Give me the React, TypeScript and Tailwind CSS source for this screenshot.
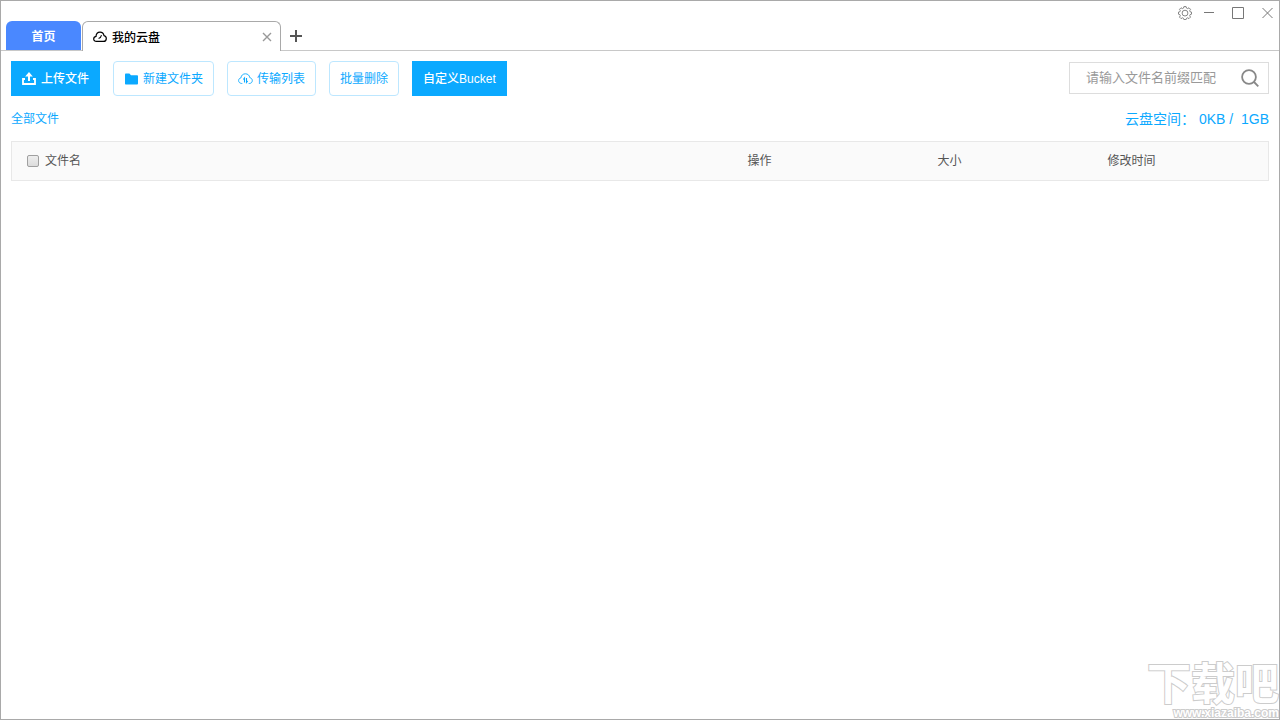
import type { ReactNode } from 'react';

// ============================================
// Cloud drive window
// ============================================

export default function App() {
  return (
    <div className="relative flex min-h-screen flex-col overflow-hidden border border-[#a9a9a9] bg-white font-['Liberation_Sans','Noto_Sans_CJK_SC',sans-serif] text-xs text-[#555]">
      <TitleBar />
      <main className="flex-1 px-[10px] pt-[10px]">
        <Toolbar />
        <div className="mt-[11px] flex h-6 items-center justify-between text-[#0ba9ff]">
          <a href="#all">全部文件</a>
          <span className="whitespace-pre text-sm">云盘空间： 0KB /  1GB</span>
        </div>
        <FileTable />
      </main>
      <Watermark />
    </div>
  );
}

// Tabs and window controls
function TitleBar() {
  return (
    <header className="flex h-[50px] items-end border-b border-[#c8c8c8] pl-[5px]">
      <button className="h-[29px] w-[75px] rounded-t-md bg-[#4a88ff] pt-0.5 font-bold text-white">首页</button>
      <div className="-mb-px ml-px flex h-[30px] w-[199px] items-center rounded-t-md border border-b-0 border-[#a9a9a9] bg-white pl-[10px] pr-2 text-black">
        <CloudIcon />
        <span className="ml-[5px] flex-1 pt-0.5 font-medium">我的云盘</span>
        <button aria-label="关闭标签" className="text-[#999]">
          <svg width="10" height="10" viewBox="0 0 10 10" fill="none" stroke="currentColor" strokeWidth="1.4">
            <path d="M1 1l8 8M9 1L1 9" />
          </svg>
        </button>
      </div>
      <button aria-label="新建标签" className="mb-2 ml-[9px] text-[#555]">
        <svg width="12" height="12" viewBox="0 0 12 12" fill="none" stroke="currentColor" strokeWidth="2">
          <path d="M6 0v12M0 6h12" />
        </svg>
      </button>
      <div className="ml-auto flex h-6 items-center self-start pr-[6px] text-[#777]">
        <button aria-label="设置">
          <GearIcon />
        </button>
        <button aria-label="最小化" className="ml-3">
          <svg width="10" height="12" viewBox="0 0 10 12" fill="none" stroke="currentColor">
            <path d="M0 5.5h10" />
          </svg>
        </button>
        <button aria-label="最大化" className="ml-[18px]">
          <svg width="12" height="12" viewBox="0 0 12 12" fill="none" stroke="currentColor">
            <path d="M.5.5h11v11H.5z" />
          </svg>
        </button>
        <button aria-label="关闭" className="ml-[18px]">
          <svg width="11" height="12" viewBox="0 0 11 12" fill="none" stroke="currentColor">
            <path d="M.5 1l10 10M10.5 1L.5 11" />
          </svg>
        </button>
      </div>
    </header>
  );
}

function Toolbar() {
  return (
    <div className="flex h-[35px] items-center gap-[13px]">
      <ToolButton primary icon={<UploadIcon />} label="上传文件" />
      <ToolButton icon={<FolderIcon />} label="新建文件夹" />
      <ToolButton icon={<TransferIcon />} label="传输列表" />
      <ToolButton label="批量删除" />
      <ToolButton primary label="自定义Bucket" />
      <div className="mt-px ml-auto flex h-8 w-[200px] items-center self-start border border-[#ddd] pl-4 pr-[9px]">
        <input
          type="text"
          aria-label="搜索文件"
          placeholder="请输入文件名前缀匹配"
          className="w-0 flex-1 text-[13px] text-[#555] outline-none placeholder:text-[#999]"
        />
        <button aria-label="搜索" className="text-[#888]">
          <svg width="18" height="18" viewBox="0 0 18 18" fill="none" stroke="currentColor" strokeWidth="1.8">
            <circle cx="8" cy="8" r="6.9" />
            <path d="M13 13l4.3 4.3" />
          </svg>
        </button>
      </div>
    </div>
  );
}

interface ToolButtonProps {
  label: string;
  icon?: ReactNode;
  primary?: boolean;
}

function ToolButton({ label, icon, primary }: ToolButtonProps) {
  const look = primary
    ? 'border-[#0ba9ff] bg-[#0ba9ff] font-medium text-white'
    : 'rounded border-[#bde7ff] bg-white text-[#0ba9ff]';

  return (
    <button className={`flex h-[35px] items-center gap-1 whitespace-nowrap border px-[10px] ${look}`}>
      {icon}
      {label}
    </button>
  );
}

function FileTable() {
  return (
    <table className="mt-[10px] w-full table-fixed border-collapse border border-[#e8e8e8] bg-[#fafafa] text-left">
      <thead>
        <tr className="h-[39px]">
          <th className="pl-[15px] font-normal">
            <label className="flex items-center gap-[6px]">
              <input
                type="checkbox"
                className="h-3 w-3 appearance-none rounded-xs border border-[#a0a0a0] bg-linear-to-b from-[#eee] to-[#dcdcdc] checked:bg-[#0ba9ff]"
              />
              文件名
            </label>
          </th>
          <th className="w-[190px] font-normal">操作</th>
          <th className="w-[170px] font-normal">大小</th>
          <th className="w-[161px] font-normal">修改时间</th>
        </tr>
      </thead>
    </table>
  );
}

// Site mark over the bottom right corner
function Watermark() {
  return (
    <div className="pointer-events-none absolute right-0 bottom-0 flex flex-col items-end font-bold text-white select-none [-webkit-text-stroke:2px_#ccc] [paint-order:stroke_fill]">
      <div className="text-[44px] leading-[44px]">下载吧</div>
      <div className="text-xs leading-3">www.xiazaiba.com</div>
    </div>
  );
}

// ============================================
// Icons
// ============================================

function CloudIcon() {
  return (
    <svg width="14" height="12" viewBox="0 0 14 12" fill="none" stroke="currentColor" strokeWidth="1.2" strokeLinecap="round">
      <path d="M3.5 10.4C1.8 10.4.7 9.4.7 8c0-1.4.9-2.3 2.3-2.6C3.2 2.7 4.900 1.2 7 1.2c2 0 3.600 1.300 4 3.400 1.400.300 2.300 1.400 2.300 2.800 0 1.800-1.200 3-2.900 3z" />
      <path d="M6 7.200c1.300-.4 2-1.200 2.300-2.700" />
    </svg>
  );
}

function GearIcon() {
  return (
    <svg width="14" height="14" viewBox="0 0 14 14" fill="none" stroke="currentColor" strokeWidth="0.9" strokeLinejoin="round">
      <path d="M5.900.6h2.200l.4 1.500 1.100.5 1.400-.8 1.500 1.500-.8 1.400.4 1.100 1.400.3v2.100l-1.400.4-.4 1.100.8 1.400-1.500 1.500-1.400-.8-1.100.500-.4 1.300H5.900l-.4-1.300-1.100-.5-1.400.8-1.500-1.500.8-1.400-.5-1.100-1.300-.4V6.100l1.300-.3.5-1.100-.8-1.400L3 1.800l1.400.8 1.100-.5z" />
      <circle cx="7" cy="7.100" r="2.900" />
    </svg>
  );
}

function UploadIcon() {
  return (
    <svg width="15" height="13" viewBox="0 0 15 13" fill="none" stroke="currentColor" strokeWidth="2">
      <path d="M3 7H1v5h12V7h-2" strokeWidth="1.8" />
      <path d="M7 9V3" />
      <path d="M3.200 4.600L7 0l3.800 4.600z" fill="currentColor" stroke="none" />
    </svg>
  );
}

function FolderIcon() {
  return (
    <svg width="15" height="12" viewBox="0 0 15 12" fill="currentColor">
      <path d="M1 2C1 1 1.400.6 2 .6h3.400L7 2.300h6.200c.6 0 .8.4.8.9v7.300c0 .6-.3 1-.9 1H2c-.6 0-1-.4-1-1z" />
    </svg>
  );
}

function TransferIcon() {
  return (
    <svg width="15" height="12" viewBox="0 0 15 12" fill="none" stroke="currentColor" strokeWidth="0.9">
      <path d="M4.300 10.500H3.700C2 10.300.6 9.300.6 7.600c0-1.500 1-2.500 2.400-2.800C3.200 2.300 5 .8 7.400.8s4.100 1.500 4.400 3.900c1.500.3 2.500 1.400 2.500 2.900 0 1.700-1.200 2.800-2.900 2.900h-.7" />
      <path d="M6.500 9.500V5L5.300 6.500M8.500 5v4.500L9.700 8" strokeWidth="1.100" />
    </svg>
  );
}
